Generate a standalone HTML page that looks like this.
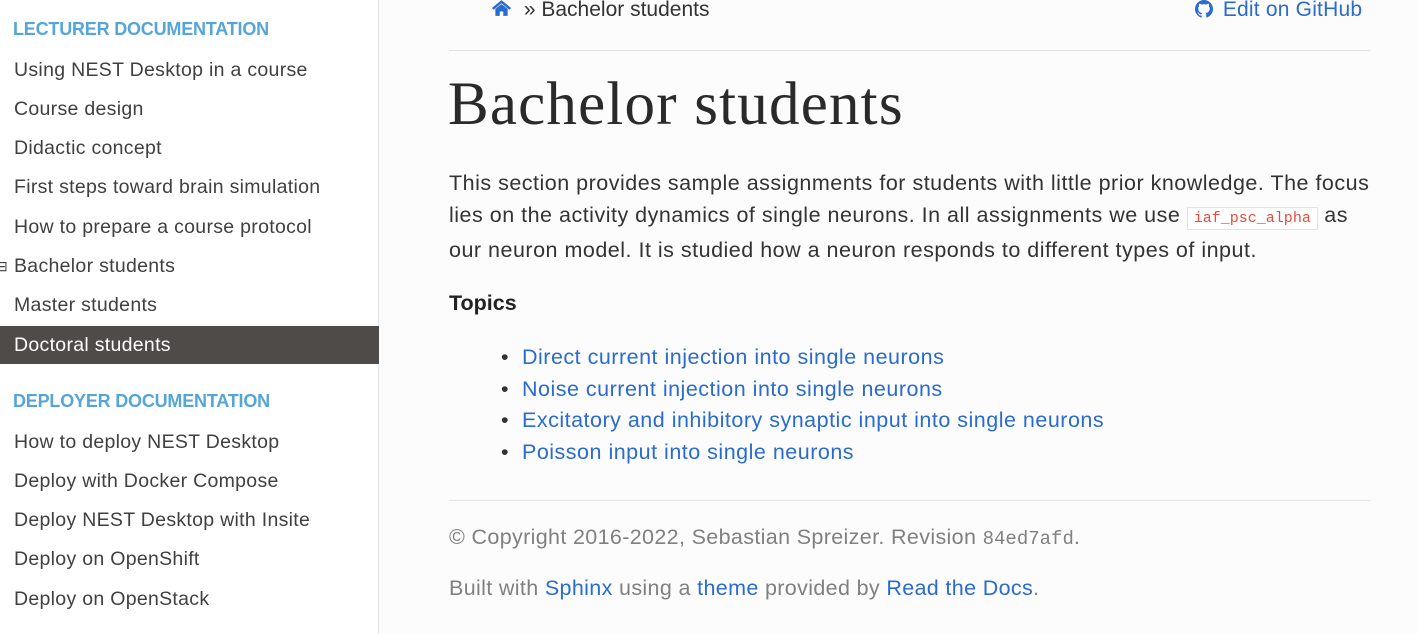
<!DOCTYPE html>
<html><head><meta charset="utf-8"><style>
*{margin:0;padding:0;box-sizing:border-box}
body{width:1418px;height:634px;overflow:hidden;background:#fcfcfc;font-family:"Liberation Sans",sans-serif;position:relative;color:#404040}
#side{position:absolute;left:0;top:0;width:379px;height:634px;background:#fff;border-right:1px solid #e1e4e5}
.cap{position:absolute;left:13px;font-size:18px;font-weight:bold;color:#55a5d9;line-height:24px;letter-spacing:-0.2px}
.it{position:absolute;left:0;width:379px;padding-left:14px;font-size:19.5px;color:#404040;line-height:36px;height:36px;white-space:nowrap;letter-spacing:0.3px}
.cur{background:#4e4b49;color:#fff}
.a{position:absolute;white-space:nowrap}
.blue{color:#2a6bd0}
p,li{font-size:21.5px;letter-spacing:0.5px}
code{font-family:"Liberation Mono",monospace;font-size:15px;color:#e74c3c;background:#fff;border:1px solid #e1e4e5;padding:2px 6px;letter-spacing:0}
</style></head><body>
<div id="side">
<div class="cap" style="top:17px">LECTURER DOCUMENTATION</div>
<div class="it" style="top:52px">Using NEST Desktop in a course</div>
<div class="it" style="top:91px">Course design</div>
<div class="it" style="top:130px">Didactic concept</div>
<div class="it" style="top:169px">First steps toward brain simulation</div>
<div class="it" style="top:209px">How to prepare a course protocol</div>
<div class="it" style="top:248px"><span style="position:absolute;left:-4px;font-size:14px">⊟</span>Bachelor students</div>
<div class="it" style="top:287px">Master students</div>
<div class="it cur" style="top:326px;height:38px;line-height:38px">Doctoral students</div>
<div class="cap" style="top:389px">DEPLOYER DOCUMENTATION</div>
<div class="it" style="top:424px">How to deploy NEST Desktop</div>
<div class="it" style="top:463px">Deploy with Docker Compose</div>
<div class="it" style="top:502px">Deploy NEST Desktop with Insite</div>
<div class="it" style="top:541px">Deploy on OpenShift</div>
<div class="it" style="top:581px">Deploy on OpenStack</div>
</div>

<div class="a" style="left:491px;top:-2px;font-size:21px;color:#333">
<svg width="21" height="18" viewBox="0 0 24 20" style="vertical-align:-1px"><path d="M12 1 L1 10 L3 12 L12 4.5 L21 12 L23 10 Z M5 11 V19 H10 V14 H14 V19 H19 V11 L12 5.5 Z" fill="#2a6bd0"/></svg>
<span style="margin-left:6px">» Bachelor students</span></div>
<div class="a blue" style="left:1195px;top:-2px;font-size:21px">
<svg width="18" height="18" viewBox="0 0 16 16" style="vertical-align:-2px"><path fill="#2a6bd0" d="M8 0C3.6 0 0 3.6 0 8c0 3.5 2.3 6.5 5.5 7.6.4.1.5-.2.5-.4v-1.4c-2.2.5-2.7-1-2.7-1-.4-.9-.9-1.2-.9-1.2-.7-.5.1-.5.1-.5.8.1 1.2.8 1.2.8.7 1.2 1.9.9 2.3.7.1-.5.3-.9.5-1.1-1.8-.2-3.6-.9-3.6-4 0-.9.3-1.6.8-2.1-.1-.2-.4-1 .1-2.1 0 0 .7-.2 2.2.8.6-.2 1.3-.3 2-.3s1.4.1 2 .3c1.5-1 2.2-.8 2.2-.8.4 1.1.2 1.9.1 2.1.5.6.8 1.3.8 2.1 0 3.1-1.9 3.7-3.6 3.9.3.3.5.8.5 1.5v2.2c0 .2.1.5.6.4C13.7 14.5 16 11.5 16 8c0-4.4-3.6-8-8-8z"/></svg>
<span style="margin-left:4px;letter-spacing:0.2px">Edit on GitHub</span></div>
<div class="a" style="left:449px;top:50px;width:921px;border-top:1px solid #e1e4e5"></div>

<div class="a" style="left:448px;top:70px;font-family:'Liberation Serif',serif;font-size:61px;color:#2a2a2a;letter-spacing:1.2px">Bachelor students</div>

<p class="a" style="left:449px;top:171px;color:#333">This section provides sample assignments for students with little prior knowledge. The focus</p>
<p class="a" style="left:449px;top:203px;color:#333">lies on the activity dynamics of single neurons. In all assignments we use <code>iaf_psc_alpha</code> as</p>
<p class="a" style="left:449px;top:238px;color:#333">our neuron model. It is studied how a neuron responds to different types of input.</p>
<p class="a" style="left:449px;top:291px;font-weight:bold;color:#222;letter-spacing:0">Topics</p>

<div class="a" style="left:501px;top:342px;font-size:21.5px;letter-spacing:0.5px;line-height:31.7px;color:#333">
<div>•&nbsp; <span class="blue">Direct current injection into single neurons</span></div>
<div>•&nbsp; <span class="blue">Noise current injection into single neurons</span></div>
<div>•&nbsp; <span class="blue">Excitatory and inhibitory synaptic input into single neurons</span></div>
<div>•&nbsp; <span class="blue">Poisson input into single neurons</span></div>
</div>
<div class="a" style="left:449px;top:500px;width:921px;border-top:1px solid #e1e4e5"></div>
<p class="a" style="left:449px;top:525px;color:#808080;letter-spacing:0.35px">© Copyright 2016-2022, Sebastian Spreizer. Revision <span style="font-family:'Liberation Mono',monospace;font-size:19px;letter-spacing:0">84ed7afd</span>.</p>
<p class="a" style="left:449px;top:576px;color:#808080;letter-spacing:0.35px">Built with <span class="blue">Sphinx</span> using a <span class="blue">theme</span> provided by <span class="blue">Read the Docs</span>.</p>
</body></html>
